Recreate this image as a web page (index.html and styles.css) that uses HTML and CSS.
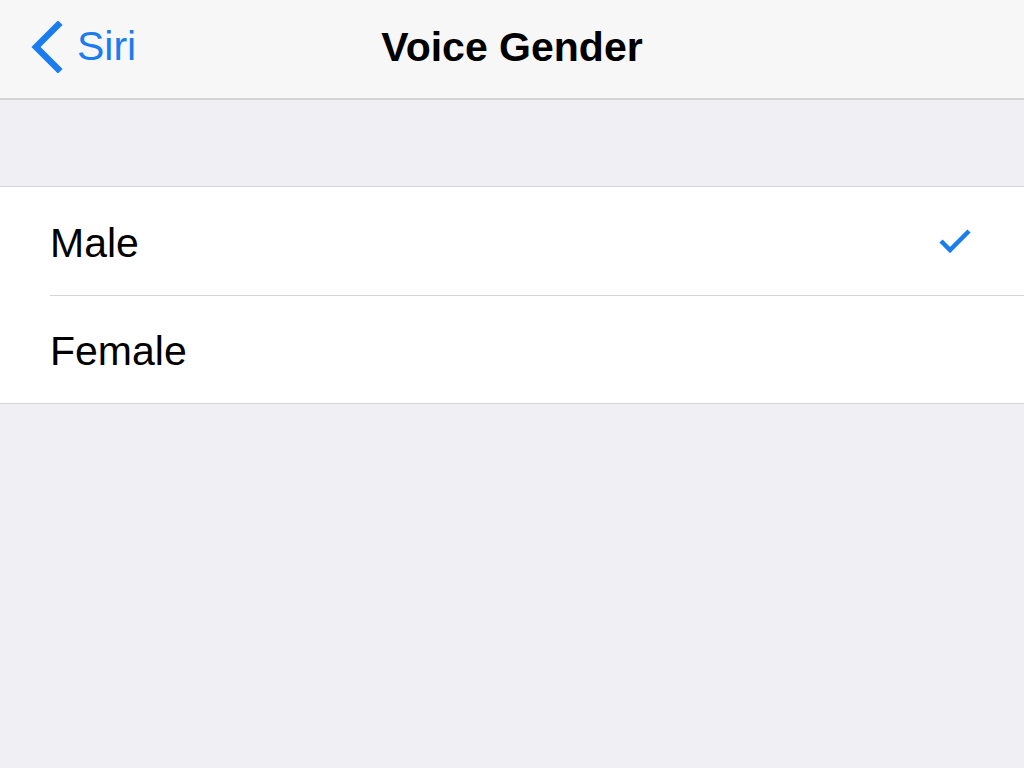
FILE: index.html
```html
<!DOCTYPE html>
<html>
<head>
    <link rel="stylesheet" href="styles.css">
</head>
<body>
    <div class="navbar">
        <a class="back" href="#">
            <svg class="chevron" width="34" height="52" viewBox="0 0 34 52">
                <path d="M29 4 L7 26 L29 48" fill="none" stroke="currentColor" stroke-width="6.5" stroke-linecap="square"/>
            </svg>
            <span>Siri</span>
        </a>
        <div class="title">Voice Gender</div>
    </div>

    <div class="content">
        <div class="group">
            <div class="row">
                <span class="label">Male</span>
                <svg class="check" width="34" height="28" viewBox="0 0 34 28">
                    <path d="M3 15 L12 24 L31 5" fill="none" stroke="currentColor" stroke-width="4.5"/>
                </svg>
            </div>
            <div class="row">
                <span class="label">Female</span>
            </div>
        </div>
    </div>
</body>
</html>
```

FILE: styles.css
```css
:root {
    --bg-color: #efeff4;
    --nav-bg: #f7f7f7;
    --text-color: #000000;
    --accent-color: #1b7cf0;
    --line-color: #d4d4d8;
}

html, body {
    margin: 0;
    padding: 0;
    height: 100%;
    background: var(--bg-color);
    font-family: 'Liberation Sans', Arial, sans-serif;
    color: var(--text-color);
}

.navbar {
    position: relative;
    height: 100px;
    background: var(--nav-bg);
    border-bottom: 2px solid var(--line-color);
    box-sizing: border-box;
    display: flex;
    align-items: center;
    justify-content: center;
}

.back {
    position: absolute;
    left: 29px;
    top: 21px;
    display: flex;
    align-items: center;
    gap: 14px;
    color: var(--accent-color);
    text-decoration: none;
    font-size: 41px;
    height: 52px;
}

.back span {
    margin-top: -2px;
}

.title {
    font-size: 41px;
    font-weight: bold;
    margin-top: -4px;
}

.content {
    padding-top: 86px;
}

.group {
    background: #ffffff;
    border-top: 1px solid var(--line-color);
    border-bottom: 1px solid var(--line-color);
}

.row {
    height: 108px;
    margin-left: 50px;
    padding-right: 52px;
    display: flex;
    align-items: center;
    justify-content: space-between;
    box-sizing: border-box;
}

.row + .row {
    border-top: 1px solid var(--line-color);
}

.label {
    font-size: 41px;
    margin-top: 4px;
}

.check {
    color: var(--accent-color);
    margin-top: -2px;
}
```
